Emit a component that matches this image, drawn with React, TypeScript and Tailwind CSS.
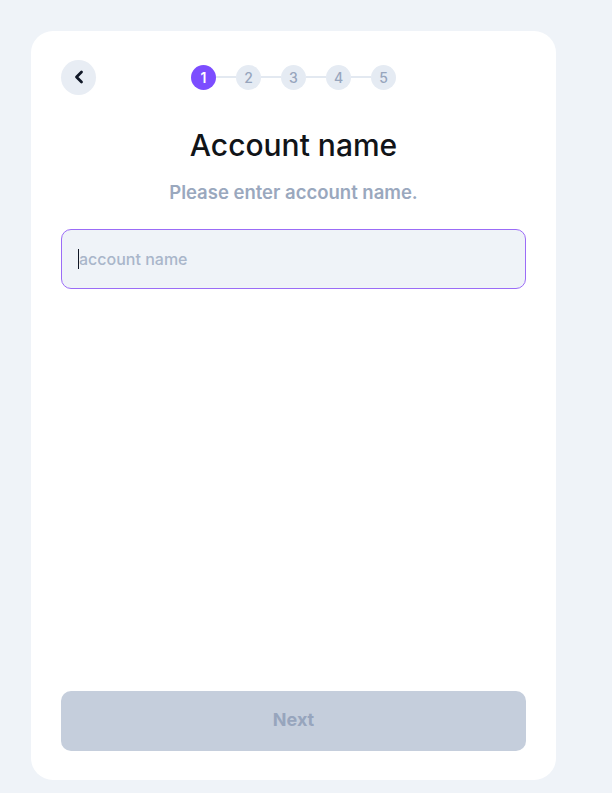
import React from "react";

export default function App() {
  const steps = [1, 2, 3, 4, 5];
  return (
    <div className="min-h-[793px] w-[612px] bg-[#eff3f8] pt-[31px] pl-[31px]" style={{ fontFamily: "Inter, 'Noto Sans', sans-serif" }}>
      <div className="w-[525px] h-[749px] bg-white rounded-[22px] px-[30px] pt-[26px] pb-[29px] flex flex-col">
        <div className="relative flex items-center h-[40px]">
          <button className="w-[35px] h-[35px] rounded-full bg-[#e8edf4] flex items-center justify-center">
            <svg width="16" height="16" viewBox="0 0 16 16" fill="none">
              <path d="M10.5 3L5.5 8L10.5 13" stroke="#111827" strokeWidth="2.8" strokeLinecap="round" strokeLinejoin="round" />
            </svg>
          </button>
          <div className="absolute left-[130px] top-[7.5px] flex items-center">
            {steps.map((s, i) => (
              <React.Fragment key={s}>
                {i > 0 && <div className="w-[20px] h-[2px] bg-[#e3e9f1]" />}
                <div
                  className={
                    s === 1
                      ? "w-[25px] h-[25px] rounded-full bg-[#7c4dff] text-white text-[14px] font-semibold flex items-center justify-center"
                      : "w-[25px] h-[25px] rounded-full bg-[#e5ebf3] text-[#97a5bd] text-[14px] font-medium flex items-center justify-center"
                  }
                >
                  {s}
                </div>
              </React.Fragment>
            ))}
          </div>
        </div>
        <h1 className="text-center text-[30px] font-medium text-[#111418] mt-[29px] leading-[38px]">Account name</h1>
        <p className="text-center text-[18.5px] font-semibold text-[#9aa8be] mt-[16px] leading-[24px]">Please enter account name.</p>
        <div className="mt-[25px] h-[60px] rounded-[10px] border border-[#9b6cf7] bg-[#eff3f8] flex items-center pl-[16px]">
          <div className="w-[1px] h-[20px] bg-[#111827]" />
          <span className="text-[16px] font-medium text-[#a9b6ca]">account name</span>
        </div>
        <div className="flex-1" />
        <button className="h-[60px] rounded-[10px] bg-[#c5cedc] text-[18px] font-bold text-[#97a5bd] pb-[4px]">Next</button>
      </div>
    </div>
  );
}
